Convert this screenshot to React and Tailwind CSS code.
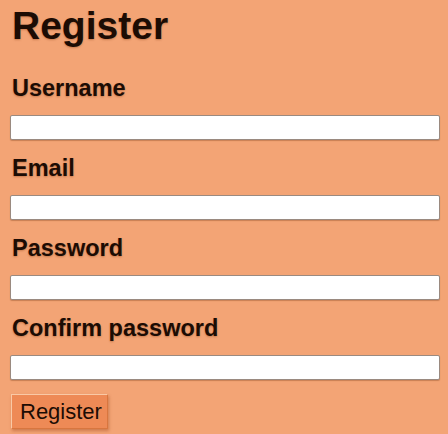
const FIELDS = ["Username", "Email", "Password", "Confirm password"];

export default function App() {
  return (
    <div
      className="min-h-[434px] bg-[#f3a475] pl-[10px] pr-2 pt-[4px] text-[#1c0c04]"
      style={{ fontFamily: '"Liberation Sans", Arial, sans-serif' }}
    >
      <h1 className="ml-[2px] text-[39px] font-bold leading-[44px] [text-shadow:0_1px_2px_rgba(120,50,10,0.35)]">
        Register
      </h1>
      <form className="mt-[26px] flex flex-col">
        {FIELDS.map((label) => (
          <div key={label} className="flex flex-col">
            <label className="ml-[2px] text-[23.5px] font-bold leading-[28px] [text-shadow:0_1px_2px_rgba(120,50,10,0.35)]">
              {label}
            </label>
            <input
              type={label.toLowerCase().includes("password") ? "password" : "text"}
              className="mt-[13px] mb-[14px] h-[25px] w-[430px] rounded-[2px] border border-[#9a8a80] bg-white shadow-[0_1px_1px_rgba(120,60,20,0.35)]"
            />
          </div>
        ))}
        <button
          type="button"
          className="ml-[1px] flex h-[35px] w-[97px] items-center border border-t-[#f9c9a6] border-l-[#f9c9a6] border-r-[#d8763f] border-b-[#d8763f] bg-[#ee8a56] px-2 text-[22px] leading-[26px] shadow-[1px_2px_3px_rgba(150,60,20,0.4)]"
        >
          Register
        </button>
      </form>
    </div>
  );
}
